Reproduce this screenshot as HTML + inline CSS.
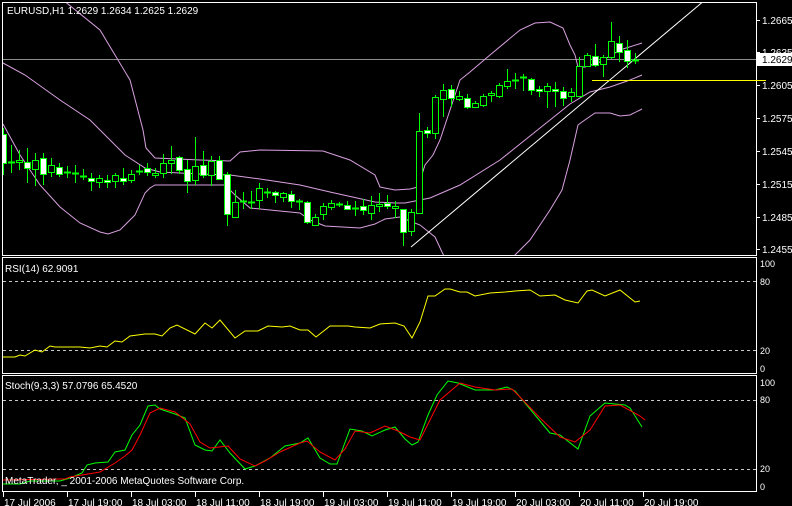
<!DOCTYPE html>
<html><head><meta charset="utf-8"><style>
html,body{margin:0;padding:0;background:#000;width:792px;height:506px;overflow:hidden}
svg{display:block}
text{font-family:"Liberation Sans",sans-serif;font-size:10px;fill:#fff}
</style></head><body>
<svg id="s" width="792" height="506" xmlns="http://www.w3.org/2000/svg">
<rect width="792" height="506" fill="#000"/>
<defs><clipPath id="cm"><rect x="3" y="3" width="753" height="252"/></clipPath></defs>
<!-- panels -->
<rect x="2.5" y="2.5" width="754" height="253" fill="none" stroke="#fff"/>
<rect x="2.5" y="257.5" width="754" height="116" fill="none" stroke="#fff"/>
<rect x="2.5" y="375.5" width="754" height="116" fill="none" stroke="#fff"/>
<g clip-path="url(#cm)">
<line x1="3" y1="59.5" x2="756" y2="59.5" stroke="#8c8c8c"/>
<g fill="none" stroke="#d9a0e0" stroke-width="1">
<polyline points="63,0 100,30 130,80 143,130 146,148 155,158 200,160 230,161 240,152 260,150 323,151 350,160 375,175 380,187 395,190 410,189 418,187 425,165 433,155 440,140 450,110 460,80 470,72 490,55 520,30 535,23 550,22 563,28 570,45 575,55 578,67 585,67 600,62 620,50 642,43"/>
<polyline points="3,63 25,75 60,100 90,120 125,155 145,168 160,172 200,174 230,175 260,179 300,185 330,192 375,202 395,203 405,203 430,198 460,185 500,160 540,128 570,104 590,92 610,87 630,80 642,75"/>
<polyline points="3,124 20,155 40,185 60,207 80,223 100,232 108,234 120,230 135,215 145,193 150,188 155,185 225,185 235,195 250,208 270,210 300,213 310,220 325,226 360,228 375,224 385,219 400,217 420,225 435,237 442,252 446,260"/>
<polyline points="510,260 515,255 530,240 550,210 562,190 570,160 578,125 582,122 595,113 610,113 620,116 630,115 642,109"/>
</g>
<line x1="411" y1="247" x2="705" y2="0" stroke="#fff"/>
<line x1="592" y1="80.5" x2="766" y2="80.5" stroke="#ffff00"/>
<g id="cd"></g>
</g>
<line x1="592" y1="80.5" x2="766" y2="80.5" stroke="#ffff00"/>
<!-- price axis -->
<g stroke="#fff">
<line x1="756" y1="20.5" x2="760" y2="20.5"/><line x1="756" y1="52.5" x2="760" y2="52.5"/><line x1="756" y1="85.5" x2="760" y2="85.5"/><line x1="756" y1="118.5" x2="760" y2="118.5"/><line x1="756" y1="151.5" x2="760" y2="151.5"/><line x1="756" y1="184.5" x2="760" y2="184.5"/><line x1="756" y1="217.5" x2="760" y2="217.5"/><line x1="756" y1="249.5" x2="760" y2="249.5"/>
</g>
<text x="762" y="24">1.2665</text>
<text x="762" y="56">1.2635</text>
<text x="762" y="89">1.2605</text>
<text x="762" y="122">1.2575</text>
<text x="762" y="155">1.2545</text>
<text x="762" y="188">1.2515</text>
<text x="762" y="221">1.2485</text>
<text x="762" y="253">1.2455</text>
<rect x="757" y="53" width="35" height="13" fill="#fff"/>
<text x="762" y="63" style="fill:#000">1.2629</text>
<text x="7" y="14">EURUSD,H1  1.2629 1.2634 1.2625 1.2629</text>
<!-- RSI -->
<line x1="3" y1="281.5" x2="756" y2="281.5" stroke="#c8c8c8" stroke-dasharray="3,3"/>
<line x1="3" y1="350.5" x2="756" y2="350.5" stroke="#c8c8c8" stroke-dasharray="3,3"/>
<polyline fill="none" stroke="#ffff00" points="3,357 15,357 20,355 25,356 35,350 42,352 50,346 55,347 65,347 80,347 90,348 100,346 107,347 115,341 122,342 130,336 145,334 155,334 162,336 170,328 177,325 195,334 205,323 212,328 220,320 235,338 245,331 258,331 268,326 282,327 290,326 300,330 308,330 316,337 330,326 348,326 355,327 370,328 380,324 395,323 404,326 412,338 420,322 428,296 435,296 445,289 450,289 460,292 467,292 475,296 490,293 505,292 515,291 530,290 540,296 555,295 565,300 578,303 587,291 592,290 605,296 620,290 635,302 640,301"/>
<text x="5" y="272">RSI(14) 62.9091</text>
<text x="760" y="267" style="font-size:9px">100</text>
<text x="760" y="285" style="font-size:9px">80</text>
<text x="760" y="354" style="font-size:9px">20</text>
<text x="760" y="372" style="font-size:9px">0</text>
<!-- Stoch -->
<line x1="3" y1="400.5" x2="756" y2="400.5" stroke="#c8c8c8" stroke-dasharray="3,3"/>
<line x1="3" y1="469.5" x2="756" y2="469.5" stroke="#c8c8c8" stroke-dasharray="3,3"/>
<polyline fill="none" stroke="#00ff00" points="3,484 20,484 30,481 60,481 70,478 82,473 87,465 95,463 108,462 115,452 125,450 132,435 140,425 148,406 155,405 160,409 175,414 185,418 195,445 205,450 212,451 220,440 230,453 245,469 255,466 270,458 285,446 300,443 308,438 320,458 330,464 337,464 350,429 362,431 372,436 385,430 395,427 405,439 412,445 418,442 428,415 437,395 448,381 458,383 475,390 495,390 507,387 515,391 535,415 550,433 560,435 578,449 590,416 605,403 625,405 630,408 642,427"/>
<polyline fill="none" stroke="#ff0000" points="3,480 60,479 65,479 70,477 100,472 115,463 125,456 132,450 140,435 150,413 160,408 175,412 190,424 200,442 210,448 228,446 240,459 255,466 265,461 280,452 300,443 307,441 320,452 335,460 345,449 355,431 370,433 385,426 398,431 410,437 420,440 440,400 460,383 475,387 495,390 512,389 520,397 540,418 560,437 575,442 590,430 605,406 620,405 640,416 645,420"/>
<text x="5" y="389">Stoch(9,3,3) 57.0796 65.4520</text>
<text x="5" y="484">MetaTrader, _ 2001-2006 MetaQuotes Software Corp.</text>
<text x="760" y="386" style="font-size:9px">100</text>
<text x="760" y="403" style="font-size:9px">80</text>
<text x="760" y="472" style="font-size:9px">20</text>
<text x="760" y="490" style="font-size:9px">0</text>
<!-- time axis -->
<g stroke="#fff">
<line x1="3.5" y1="492" x2="3.5" y2="497"/><line x1="67.5" y1="492" x2="67.5" y2="497"/><line x1="131.5" y1="492" x2="131.5" y2="497"/><line x1="195.5" y1="492" x2="195.5" y2="497"/><line x1="259.5" y1="492" x2="259.5" y2="497"/><line x1="323.5" y1="492" x2="323.5" y2="497"/><line x1="387.5" y1="492" x2="387.5" y2="497"/><line x1="451.5" y1="492" x2="451.5" y2="497"/><line x1="515.5" y1="492" x2="515.5" y2="497"/><line x1="579.5" y1="492" x2="579.5" y2="497"/><line x1="643.5" y1="492" x2="643.5" y2="497"/>
</g>
<g style="font-size:9.5px">
<text x="4" y="506">17 Jul 2006</text>
<text x="68" y="506">17 Jul 19:00</text>
<text x="132" y="506">18 Jul 03:00</text>
<text x="196" y="506">18 Jul 11:00</text>
<text x="260" y="506">18 Jul 19:00</text>
<text x="324" y="506">19 Jul 03:00</text>
<text x="388" y="506">19 Jul 11:00</text>
<text x="452" y="506">19 Jul 19:00</text>
<text x="516" y="506">20 Jul 03:00</text>
<text x="580" y="506">20 Jul 11:00</text>
<text x="644" y="506">20 Jul 19:00</text>
</g>
</svg>
<script>
// [bodyTop, bodyBottom, wickTop, wickBottom, white(1)/green(0)]
var d=[[134,163,128,175,1],[162,163,145,173,0],[160,162,150,170,0],[162,168,148,183,1],[160,169,153,186,0],[158,174,153,185,1],[165,172,158,177,0],[167,174,163,177,1],[172,172,166,178,0],[173,173,165,183,0],[176,176,169,180,0],[178,181,173,191,1],[178,182,175,188,0],[180,182,175,188,1],[175,181,173,188,0],[178,181,168,185,1],[174,180,170,183,0],[171,172,165,175,0],[168,172,163,176,1],[173,175,168,178,0],[163,173,154,178,0],[160,163,146,174,0],[157,170,156,174,1],[169,181,160,193,1],[166,180,137,185,0],[165,175,151,178,1],[161,175,156,186,0],[160,179,156,180,1],[174,214,172,226,1],[202,217,190,217,0],[201,201,192,209,0],[202,202,191,209,0],[188,200,183,209,0],[192,193,188,198,0],[192,195,191,203,1],[193,197,192,202,0],[194,201,191,208,1],[201,202,199,210,0],[202,222,201,224,1],[217,225,214,225,0],[206,214,203,220,0],[203,207,200,210,0],[204,205,202,207,0],[205,209,201,210,1],[208,208,201,216,0],[206,210,199,215,1],[205,213,196,220,0],[204,206,193,212,0],[203,206,195,209,1],[206,208,201,218,0],[209,232,209,246,1],[212,231,209,236,0],[131,213,113,213,0],[130,133,127,138,1],[97,133,95,139,0],[90,99,84,117,0],[89,98,85,107,1],[96,99,91,101,0],[98,107,94,109,1],[103,107,101,108,0],[96,105,94,107,0],[93,95,91,102,0],[85,96,83,98,0],[81,86,69,89,0],[80,81,73,89,0],[77,78,74,91,0],[79,90,78,95,1],[89,91,86,97,1],[86,91,83,108,0],[89,91,82,107,1],[91,98,87,106,1],[92,96,88,102,0],[66,96,57,96,0],[55,66,53,67,0],[56,65,44,67,1],[57,64,55,77,0],[41,57,22,59,0],[43,52,36,62,1],[50,61,40,68,1],[60,60,53,64,0]];
var g=document.getElementById('cd'),ns='http://www.w3.org/2000/svg',h='';
for(var i=0;i<d.length;i++){var x=3+8*i,c=d[i];
h+='<line x1="'+(x+.5)+'" y1="'+c[2]+'" x2="'+(x+.5)+'" y2="'+c[3]+'" stroke="#00ff00"/>';
if(c[1]-c[0]<2){h+='<line x1="'+(x-3)+'" y1="'+(c[0]+.5)+'" x2="'+(x+4)+'" y2="'+(c[0]+.5)+'" stroke="#00ff00" stroke-width="2"/>';}
else h+='<rect x="'+(x-2.5)+'" y="'+(c[0]+.5)+'" width="6" height="'+(c[1]-c[0])+'" fill="'+(c[4]?'#fff':'#000')+'" stroke="#00ff00"/>';}
g.innerHTML=h;
</script>
</body></html>
